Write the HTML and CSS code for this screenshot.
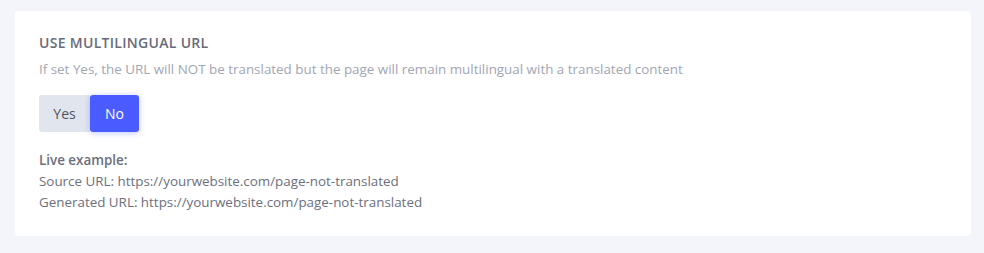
FILE: index.html
```html
<!DOCTYPE html>
<html>
<head lang="en">
    <meta charset="UTF-8">
    <title>Multilingual URL</title>
    <link rel="stylesheet" href="styles.css">
</head>
<body>
<div class="panel">
    <div class="panel-title">USE MULTILINGUAL URL</div>
    <div class="panel-desc">If set Yes, the URL will NOT be translated but the page will remain multilingual with a translated content</div>
    <div class="switch">
        <a href="javascript:void(0)" class="switch-btn">Yes</a>
        <a href="javascript:void(0)" class="switch-btn active">No</a>
    </div>
    <div class="example">
        <div class="example-title">Live example:</div>
        <div>Source URL: https://yourwebsite.com/page-not-translated</div>
        <div>Generated URL: https://yourwebsite.com/page-not-translated</div>
    </div>
</div>
</body>
</html>
```

FILE: styles.css
```css
*{
    margin: 0;
    padding: 0;
    box-sizing: border-box;
}
body{
    background: #f4f5fa;
    padding: 11px 13px 17px 15px;
    font-family: "Open Sans", "Liberation Sans", sans-serif;
    color: #6c6f7e;
}
a{
    text-decoration: none;
}
.panel{
    background: #fff;
    border-radius: 4px;
    padding: 23px 24px 24px 24px;
    height: 225px;
}
.panel-title{
    font-size: 14px;
    font-weight: 600;
    letter-spacing: 0.3px;
    color: #686b7a;
    line-height: 18px;
}
.panel-desc{
    margin-top: 7px;
    font-size: 13.4px;
    color: #a2a6b2;
    line-height: 20px;
}
.switch{
    display: flex;
    margin-top: 16px;
    width: 100px;
    height: 37px;
}
.switch-btn{
    display: flex;
    align-items: center;
    justify-content: center;
    width: 51px;
    font-size: 14px;
    color: #50535f;
    background: #e1e6ee;
    border-radius: 3px 0 0 3px;
}
.switch-btn.active{
    width: 49px;
    background: #4a5cff;
    color: #fff;
    border-radius: 3px;
    box-shadow: 0 1px 6px rgba(74, 92, 255, 0.35);
}
.example{
    margin-top: 18px;
    font-size: 13.4px;
    line-height: 21px;
}
.example-title{
    font-weight: 600;
}
```
